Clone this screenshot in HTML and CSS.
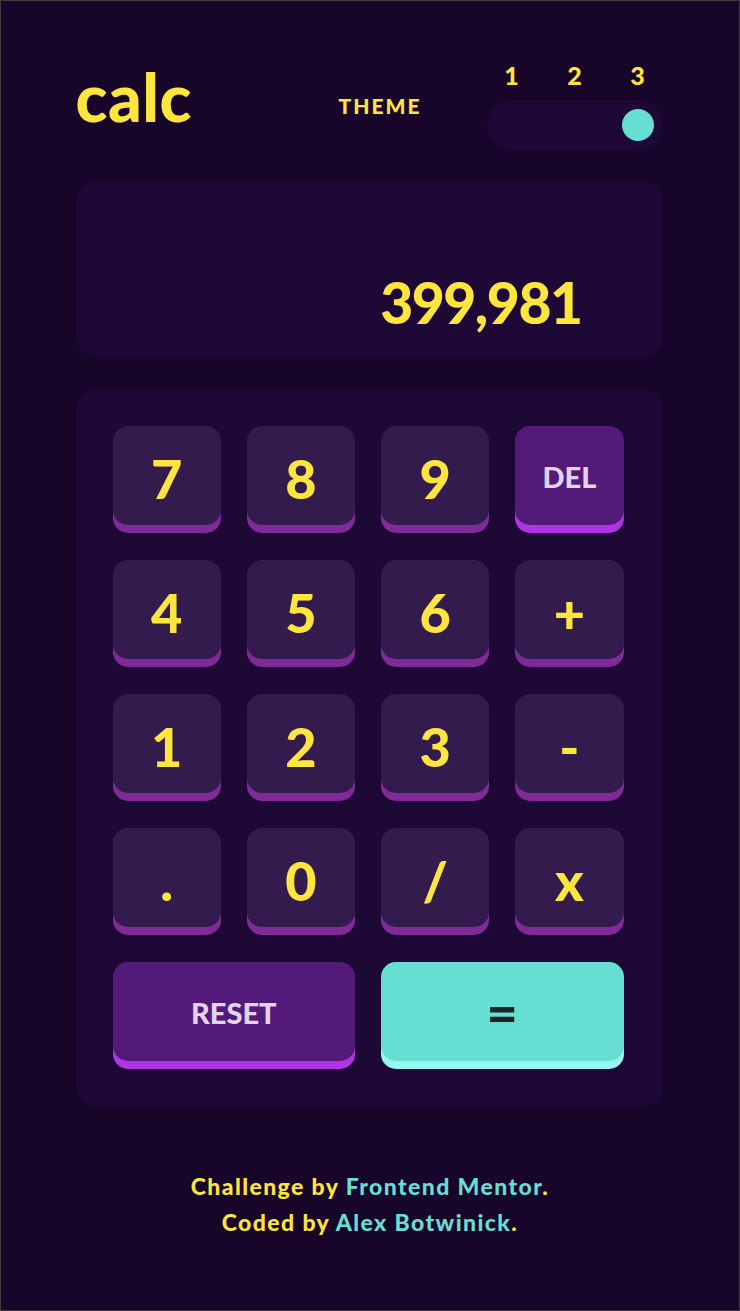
FILE: index.html
```html
<!DOCTYPE html>
<html lang="en">
<head>
<meta charset="utf-8">
<title>calc</title>
<link rel="stylesheet" href="styles.css">
</head>
<body>
<div class="page">
  <main class="calc">
    <header class="top">
      <h1 class="logo">calc</h1>
      <div class="theme">
        <span class="theme-label">THEME</span>
        <div class="switch">
          <div class="nums"><span>1</span><span>2</span><span>3</span></div>
          <div class="track"><span class="knob"></span></div>
        </div>
      </div>
    </header>
    <section class="screen"><span class="value">399,981</span></section>
    <section class="keypad">
      <button class="key">7</button>
      <button class="key">8</button>
      <button class="key">9</button>
      <button class="key key-fn">DEL</button>
      <button class="key">4</button>
      <button class="key">5</button>
      <button class="key">6</button>
      <button class="key">+</button>
      <button class="key">1</button>
      <button class="key">2</button>
      <button class="key">3</button>
      <button class="key">-</button>
      <button class="key">.</button>
      <button class="key">0</button>
      <button class="key">/</button>
      <button class="key">x</button>
      <button class="key key-fn key-wide">RESET</button>
      <button class="key key-eq key-wide">=</button>
    </section>
  </main>
  <footer class="credits">
    <p>Challenge by <a href="#">Frontend Mentor</a>.</p>
    <p>Coded by <a href="#">Alex Botwinick</a>.</p>
  </footer>
</div>
</body>
</html>
```
FILE: styles.css
```css
* { box-sizing: border-box; }
html, body { margin: 0; padding: 0; }
body {
  background: #17062a;
  font-family: "Lato", "Open Sans", sans-serif;
  font-weight: 900;
  color: #ffe53d;
}
.page {
  min-height: 100vh;
  border: 1px solid #3c3c3c;
  padding-top: 59px;
}
.calc {
  width: 587px;
  margin: 0 auto;
  position: relative;
  left: -1px;
}
.top {
  display: flex;
  align-items: center;
  justify-content: space-between;
  height: 90px;
}
.logo {
  margin: 0 0 16px;
  font-size: 66px;
  font-weight: 900;
  line-height: 1;
  letter-spacing: 0.5px;
}
.theme {
  display: flex;
  align-items: center;
  gap: 65px;
}
.theme-label {
  font-size: 21px;
  letter-spacing: 2px;
}
.switch {
  width: 176px;
}
.nums {
  display: grid;
  grid-template-columns: repeat(3, 50px);
  justify-content: space-between;
  text-align: center;
  font-size: 25px;
  line-height: 30px;
}
.track {
  margin-top: 10px;
  height: 50px;
  border-radius: 25px;
  background: #1e0836;
  padding: 9px;
  display: flex;
  justify-content: flex-end;
}
.knob {
  width: 32px;
  height: 32px;
  border-radius: 50%;
  background: #66ded2;
}
.screen {
  margin-top: 32px;
  height: 175px;
  border-radius: 20px;
  background: #1e0836;
  display: flex;
  justify-content: flex-end;
  align-items: flex-end;
  padding: 0 81px 26px 0;
}
.value {
  font-size: 57px;
  line-height: 1;
  letter-spacing: -1.5px;
}
.keypad {
  margin-top: 33px;
  border-radius: 20px;
  background: #1e0836;
  padding: 36px 39px 45px 37px;
  display: grid;
  grid-template-columns: repeat(4, 1fr);
  grid-auto-rows: 99px;
  column-gap: 26px;
  row-gap: 35px;
}
.key {
  border: 0;
  border-radius: 15px;
  background: #331c4d;
  box-shadow: 0 8px 0 #7f2a97;
  color: #ffe53d;
  font-family: inherit;
  font-weight: 900;
  font-size: 54px;
  line-height: 1;
  padding: 6px 0 0;
}
.key-fn {
  background: #541a7a;
  box-shadow: 0 8px 0 #b033e8;
  color: #e2d4ec;
  font-size: 29px;
  padding-top: 2px;
}
.key-wide { grid-column: span 2; }
.key-eq {
  background: #66ded2;
  box-shadow: 0 8px 0 #93f7ee;
  color: #1a2327;
  font-size: 54px;
  padding-top: 0;
}
.credits {
  margin-top: 62px;
  text-align: center;
  font-size: 23px;
  line-height: 36px;
  letter-spacing: 1.4px;
}
.credits p { margin: 0; }
.credits a {
  color: #66ded2;
  text-decoration: none;
}
```
